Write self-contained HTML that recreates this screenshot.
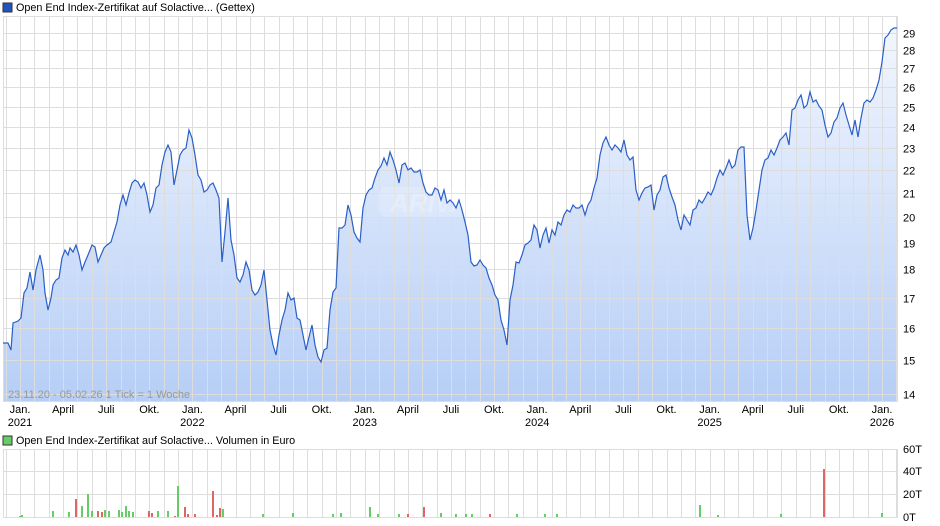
<!DOCTYPE html>
<html><head><meta charset="utf-8"><style>
body{margin:0;background:#fff;width:940px;height:526px;overflow:hidden;font-family:"Liberation Sans",Arial,sans-serif;}
svg{position:absolute;left:0;top:0}
</style></head><body>
<svg id="s" width="940" height="526" xmlns="http://www.w3.org/2000/svg" font-family="Liberation Sans, Arial, sans-serif">
<defs>
<linearGradient id="g" x1="0" y1="0" x2="0" y2="1">
<stop offset="0" stop-color="#f2f6fe"/><stop offset="1" stop-color="#b6cef6"/>
</linearGradient>
<clipPath id="c"><rect x="3" y="16" width="895" height="385"/></clipPath>
</defs>
<rect x="3" y="3" width="9" height="9" fill="#2255bb" stroke="#333" stroke-width="1"/>
<text x="16" y="11" font-size="10.8" fill="#000">Open End Index-Zertifikat auf Solactive... (Gettex)</text>
<rect x="3" y="436" width="9" height="9" fill="#66cc66" stroke="#333" stroke-width="1"/>
<text x="16" y="444" font-size="10.8" fill="#000">Open End Index-Zertifikat auf Solactive... Volumen in Euro</text>
<g clip-path="url(#c)">
<path id="area" fill="url(#g)" stroke="none"/>
</g>
<g id="grid" stroke="#dddddd" stroke-width="1" fill="none"></g>
<g clip-path="url(#c)">
<rect x="378" y="187" width="146" height="30" rx="8" fill="#ffffff" opacity="0.18"/>
<text x="451" y="212" font-size="26" font-weight="bold" font-style="italic" fill="#ffffff" opacity="0.25" text-anchor="middle">ARIVA.DE</text>
<path id="line" fill="none" stroke="#2a5fc8" stroke-width="1.2"/>
</g>
<text x="8" y="398" font-size="11" fill="#999">23.11.20 - 05.02.26   1 Tick = 1 Woche</text>
<g id="vol"></g>
<g id="lab" font-size="11" fill="#000"></g>
</svg>
<script>
var N="http://www.w3.org/2000/svg";
function el(p,t,a,txt){var e=document.createElementNS(N,t);for(var k in a)e.setAttribute(k,a[k]);if(txt!=null)e.textContent=txt;p.appendChild(e);return e;}
var G=document.getElementById('grid'),L=document.getElementById('lab'),V=document.getElementById('vol');
var yTop=33,yBot=394,lt=Math.log(29),lb=Math.log(14);
function yv(v){return yBot-(Math.log(v)-lb)/(lt-lb)*(yBot-yTop);}
el(G,'line',{x1:3,y1:16.5,x2:898,y2:16.5});
el(G,'line',{x1:3,y1:401.5,x2:898,y2:401.5});
for(var v=14;v<=29;v++){var yy=Math.round(yv(v))+0.5;el(G,'line',{x1:3,y1:yy,x2:898,y2:yy});el(L,'text',{x:903,y:yy+4},String(v));}
[449,471,494,517].forEach(function(yy,i){el(G,'line',{x1:3,y1:yy+0.5,x2:898,y2:yy+0.5});el(L,'text',{x:903,y:yy+4},['60T','40T','20T','0T'][i]);});
var xs=[3.5,897.5];
for(var m=-1;m<62;m++){var x=20+m*172.4/12;if(x>3&&x<898)xs.push(Math.round(x)+0.5);}
xs.forEach(function(x){el(G,'line',{x1:x,y1:16,x2:x,y2:401});el(G,'line',{x1:x,y1:449,x2:x,y2:517});});
var names=['Jan.','April','Juli','Okt.'];
for(var yr=0;yr<6;yr++)for(var q=0;q<4;q++){var x=20+yr*172.4+q*43.1;if(x>895)continue;
el(L,'text',{x:x,y:413,'text-anchor':'middle'},names[q]);if(q==0)el(L,'text',{x:x,y:426,'text-anchor':'middle'},String(2021+yr));}
var P=[3,343,8,343,11,350,13,323,18,321,21,318,24,293,27,288,30,272,33,290,36,270,40,255,43,270,45,293,48,310,51,298,53,285,56,280,59,278,62,258,65,250,68,255,70,248,73,252,76,245,79,255,82,270,85,262,88,255,92,245,95,247,98,262,101,255,104,248,107,245,111,242,114,232,117,222,120,205,123,195,126,205,129,193,132,183,135,180,138,182,141,188,144,183,147,195,150,212,153,205,156,188,159,185,162,165,165,152,168,145,171,152,174,185,177,170,180,155,183,150,186,148,189,130,192,138,195,155,198,175,201,180,204,192,207,190,210,185,213,183,216,190,219,198,222,262,225,232,228,198,231,240,234,255,237,278,240,282,243,275,246,262,249,270,252,290,255,295,258,292,261,285,264,270,267,300,270,330,273,345,276,355,279,335,282,320,285,310,288,293,291,300,294,298,297,318,300,320,303,335,306,350,309,337,312,325,315,345,318,357,321,362,324,350,327,348,330,310,333,292,336,288,339,228,342,228,345,225,348,205,351,215,354,232,357,238,360,242,363,208,366,195,369,190,372,188,375,178,378,170,381,166,384,158,387,165,390,152,393,160,396,170,399,183,402,165,405,163,408,170,411,168,414,172,417,172,420,170,423,183,426,192,429,195,432,195,435,188,438,190,441,200,444,190,447,203,450,200,453,203,456,208,459,200,462,210,465,222,468,235,471,262,474,266,477,265,480,260,483,265,486,268,489,278,492,285,495,295,498,300,501,320,504,330,507,345,510,300,513,285,516,262,519,263,522,255,525,245,528,243,531,240,534,225,537,230,540,248,543,235,546,228,549,243,552,230,555,235,558,222,561,225,564,215,567,210,570,212,573,205,576,208,579,208,582,205,585,215,588,205,591,200,594,188,597,178,600,155,603,143,606,137,609,145,612,150,615,145,618,148,621,152,624,140,627,155,630,160,633,157,636,190,639,200,642,193,645,188,648,187,651,185,654,210,657,195,660,190,663,177,666,175,669,188,672,197,675,205,678,220,681,230,684,215,687,220,690,225,693,210,696,208,699,200,702,203,705,198,708,192,711,195,714,188,717,178,720,170,723,175,726,168,729,160,732,168,735,165,738,150,741,147,744,147,747,215,750,240,753,228,756,210,759,190,762,170,765,160,768,158,771,150,774,155,777,148,780,140,783,137,786,133,789,145,792,110,795,108,798,100,801,95,804,108,807,105,810,92,813,102,816,100,819,106,822,110,825,125,828,137,831,133,834,122,837,118,840,108,843,103,846,115,849,125,852,135,855,120,858,137,861,118,864,103,867,100,870,102,873,98,876,90,879,80,882,62,885,38,888,35,891,30,894,28,897,28];
var d='M'+P[0]+','+P[1];for(var i=2;i<P.length;i+=2)d+=' L'+P[i]+','+P[i+1];
document.getElementById('line').setAttribute('d',d);
document.getElementById('area').setAttribute('d',d+' L897,401 L3,401 Z');
var B=[[20,1,'g'],[22,2,'g'],[53,6,'g'],[69,5,'g'],[76,18,'r'],[82,11,'g'],[88,23,'g'],[92,6,'g'],[98,6,'r'],[102,5,'r'],[105,7,'g'],[109,6,'g'],[119,7,'g'],[122,5,'g'],[126,11,'g'],[129,6,'g'],[133,5,'g'],[149,6,'r'],[152,4,'r'],[158,6,'g'],[168,6,'g'],[175,1,'r'],[178,31,'g'],[185,10,'r'],[188,3,'r'],[195,3,'r'],[213,26,'r'],[217,2,'r'],[220,9,'r'],[223,8,'g'],[263,3,'g'],[293,4,'g'],[333,3,'g'],[341,4,'g'],[370,10,'g'],[378,3,'g'],[399,3,'g'],[408,3,'r'],[424,10,'r'],[441,4,'g'],[456,3,'g'],[466,3,'g'],[472,3,'g'],[490,3,'r'],[517,3,'g'],[545,3,'g'],[557,3,'g'],[700,12,'g'],[718,2,'g'],[781,3,'g'],[824,48,'r'],[882,4,'g']];
B.forEach(function(b){el(V,'rect',{x:b[0]-1,y:517-b[1],width:2,height:b[1],fill:b[2]=='g'?'#66cc66':'#dd6666'});});
</script>
</body></html>
